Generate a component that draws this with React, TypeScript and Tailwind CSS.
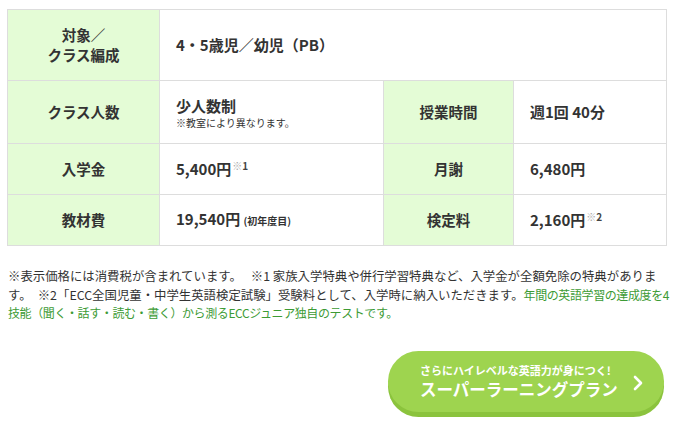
const font = { fontFamily: '"Noto Sans CJK JP", "Noto Sans", sans-serif' };

function Label({ children }: { children: React.ReactNode }) {
  return (
    <th className="border border-[#dddddd] bg-[#e4fcd6] text-center align-middle text-[14.5px] font-bold leading-[20px] text-[#333333]">
      {children}
    </th>
  );
}

function Value({ children, colSpan }: { children: React.ReactNode; colSpan?: number }) {
  return (
    <td
      colSpan={colSpan}
      className="border border-[#dddddd] bg-white pl-4 text-left align-middle text-[15px] font-bold leading-[20px] text-[#333333]"
    >
      {children}
    </td>
  );
}

function Note({ n }: { n: string }) {
  return (
    <span className="ml-[1px] align-[5px] text-[10px] font-bold leading-none">
      <span className="text-[#aaaaaa]">※</span>
      <span className="text-[#444444]">{n}</span>
    </span>
  );
}

export default function App() {
  return (
    <div className="w-[678px] bg-white px-[7px] pt-[9px]" style={font}>
      <table className="w-[659px] table-fixed border-collapse">
        <colgroup>
          <col className="w-[152px]" />
          <col className="w-[224px]" />
          <col className="w-[130px]" />
          <col className="w-[153px]" />
        </colgroup>
        <tbody>
          <tr className="h-[71px]">
            <Label>
              対象／
              <br />
              クラス編成
            </Label>
            <Value colSpan={3}>4・5歳児／幼児（PB）</Value>
          </tr>
          <tr className="h-[63px]">
            <Label>クラス人数</Label>
            <Value>
              <p>少人数制</p>
              <p className="text-[10px] font-normal leading-[13px]">※教室により異なります。</p>
            </Value>
            <Label>授業時間</Label>
            <Value>週1回 40分</Value>
          </tr>
          <tr className="h-[51px]">
            <Label>入学金</Label>
            <Value>
              5,400円
              <Note n="1" />
            </Value>
            <Label>月謝</Label>
            <Value>6,480円</Value>
          </tr>
          <tr className="h-[51px]">
            <Label>教材費</Label>
            <Value>
              19,540円 <span className="text-[10px]">(初年度目)</span>
            </Value>
            <Label>検定料</Label>
            <Value>
              2,160円
              <Note n="2" />
            </Value>
          </tr>
        </tbody>
      </table>

      <p className="mt-[21px] w-[664px] whitespace-nowrap pl-[1px] text-[12.4px] leading-[18.5px] text-[#333333]">
        ※表示価格には消費税が含まれています。　 ※1 家族入学特典や併行学習特典など、入学金が全額免除の特典がありま
        <br />
        す。　※2「ECC全国児童・中学生英語検定試験」受験料として、入学時に納入いただきます。
        <span className="text-[12px] tracking-[-0.4px] text-[#3d9b35]">
          年間の英語学習の達成度を4
          <br />
          技能（聞く・話す・読む・書く）から測るECCジュニア独自のテストです。
        </span>
      </p>

      <div className="mt-[28px] flex justify-end pr-[7px]">
        <a
          href="#"
          className="flex h-[61px] w-[276px] items-center justify-between rounded-full bg-[#9ed44f] pl-[32px] pr-[20px] text-white shadow-[0_5px_0_#8bc33d]"
        >
          <div className="flex flex-col">
            <span className="text-[11px] font-bold leading-[15px]">さらにハイレベルな英語力が身につく!</span>
            <span className="text-[16.5px] font-bold leading-[22px]">スーパーラーニングプラン</span>
          </div>
          <svg width="12" height="16" viewBox="0 0 12 16" fill="none" className="mt-[4px]">
            <path d="M3 2 L9 8 L3 14" stroke="white" strokeWidth="2.6" strokeLinecap="round" strokeLinejoin="round" />
          </svg>
        </a>
      </div>
      <div className="h-[20px]" />
    </div>
  );
}
